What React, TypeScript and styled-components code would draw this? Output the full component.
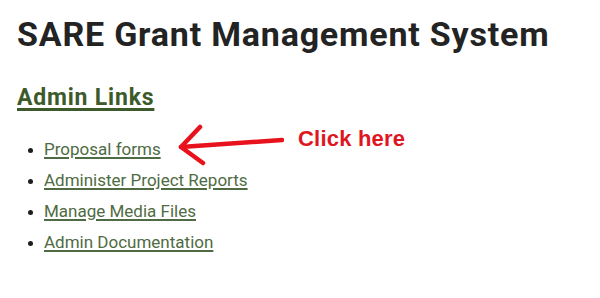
import styled, { createGlobalStyle } from 'styled-components';

const GlobalStyle = createGlobalStyle`
  html, body {
    margin: 0;
    padding: 0;
    background: #ffffff;
  }
  body {
    font-family: Roboto, "Noto Sans", Arial, sans-serif;
  }
`;

const Page = styled.div`
  position: relative;
  width: 600px;
  height: 298px;
  box-sizing: border-box;
  padding: 14px 17px 0;
  background: #ffffff;
`;

const Title = styled.h1`
  margin: 0;
  font-size: 34px;
  line-height: 40px;
  font-weight: 700;
  color: #232323;
  letter-spacing: 0.8px;
`;

const SectionTitle = styled.h2`
  margin: 30px 0 0;
  font-size: 23px;
  line-height: 28px;
  font-weight: 700;
  letter-spacing: 0.8px;
`;

const SectionLink = styled.a`
  color: #3c5a2a;
  text-decoration: underline;
  text-decoration-thickness: 2.5px;
  text-underline-offset: 3px;
`;

const LinkList = styled.ul`
  margin: 22px 0 0;
  padding: 0 0 0 11px;
  list-style: none;
`;

const Item = styled.li`
  display: flex;
  align-items: center;
  gap: 11px;
  height: 31px;
  font-size: 17px;
  line-height: 31px;
  &::before {
    content: '';
    width: 5px;
    height: 5px;
    margin-top: 2px;
    border-radius: 50%;
    background: #1e1e1e;
  }
`;

const ItemLink = styled.a`
  color: #4f6b43;
  text-decoration: underline;
  text-decoration-thickness: 1.5px;
  text-underline-offset: 2px;
`;

const Annotation = styled.div`
  position: absolute;
  left: 178px;
  top: 124px;
  display: flex;
  align-items: flex-start;
  gap: 14px;
`;

const ClickText = styled.span`
  margin-top: 3px;
  font-family: "Liberation Sans", Arial, sans-serif;
  font-weight: 700;
  font-size: 22px;
  line-height: 24px;
  letter-spacing: 0.2px;
  color: #e0161f;
`;

const Arrow = () => (
  <svg width="106" height="42" viewBox="0 0 106 42" fill="none">
    <path d="M3 23 L104 16" stroke="#e8121c" strokeWidth="4.5" strokeLinecap="round" />
    <path d="M22 3 L3 23 L25 39" stroke="#e8121c" strokeWidth="4.5" strokeLinecap="round" strokeLinejoin="round" />
  </svg>
);

const links = [
  'Proposal forms',
  'Administer Project Reports',
  'Manage Media Files',
  'Admin Documentation',
];

export default function App() {
  return (
    <>
      <GlobalStyle />
      <Page>
        <Title>SARE Grant Management System</Title>
        <SectionTitle>
          <SectionLink href="#">Admin Links</SectionLink>
        </SectionTitle>
        <LinkList>
          {links.map((label) => (
            <Item key={label}>
              <ItemLink href="#">{label}</ItemLink>
            </Item>
          ))}
        </LinkList>
        <Annotation>
          <Arrow />
          <ClickText>Click here</ClickText>
        </Annotation>
      </Page>
    </>
  );
}
